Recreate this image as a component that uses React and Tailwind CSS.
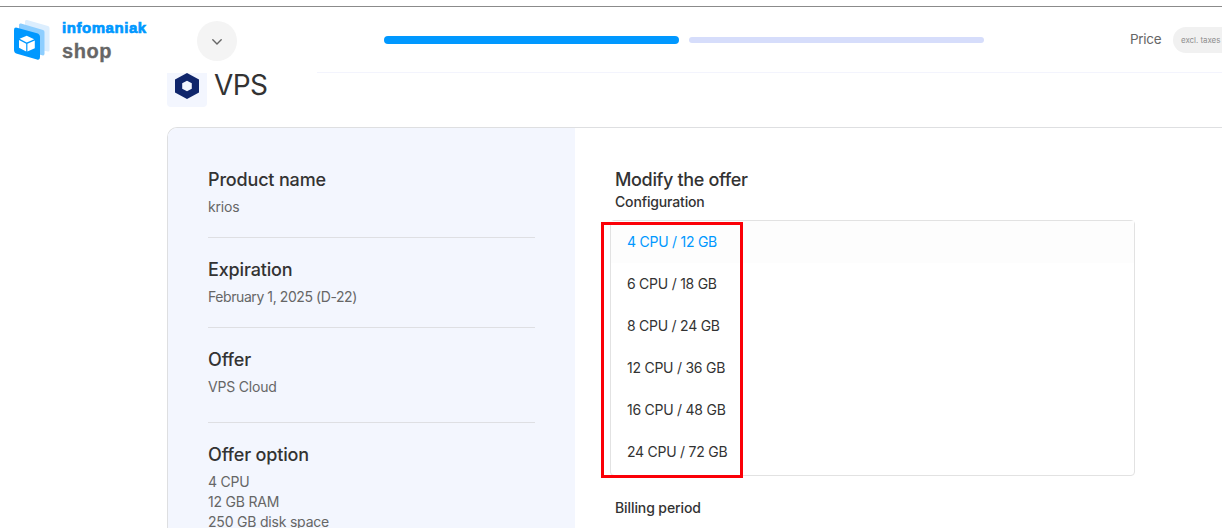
function Logo() {
  return (
    <div className="flex w-[197px] shrink-0 items-start pl-[13px]">
      <svg width="37" height="42" viewBox="0 0 37 42" className="mt-3 block">
        <path d="M12 2.5Q12 .5 14 1L35 7Q36.5 7.6 36.5 9V31Q36.5 32.8 35 32.5L12 28Z" fill="#dceefe" />
        <path d="M6 6Q6 4 8 4.5L30 11Q31.5 11.6 31.5 13V34.5Q31.5 36.6 30 36.5L6 30Z" fill="#8dceff" />
        <path d="M1 11Q1 8 4 8.7L24 14.3Q27 15.3 27 18V38Q27 41.6 24 40.6L4 34.8Q1 34 1 31Z" fill="#0098ff" />
        <path d="M13.7 16.8L21.2 20.2L13.7 23.6L6.6 19.8Z" fill="#fff" />
        <path d="M6 21L13.2 24.8V32.4L6 28.7ZM21.8 21.4L14.4 24.8V32.4L21.8 29.2Z" fill="#fff" />
      </svg>
      <div className="ml-[12px] mt-[13px] flex flex-col whitespace-nowrap font-['Liberation_Sans',sans-serif]">
        <span className="text-[15px] font-bold leading-[16px] tracking-[0.55px] text-[#0098ff] [-webkit-text-stroke:0.7px_#0098ff]">infomaniak</span>
        <span className="mt-[4px] text-[20px] font-bold leading-[22px] tracking-[0.6px] text-[#666] [-webkit-text-stroke:0.3px_#666]">shop</span>
      </div>
    </div>
  );
}

function Header() {
  return (
    <header className="flex h-[66px] shrink-0 bg-white text-[#666]">
      <Logo />
      <button className="mt-[14px] flex h-10 w-10 shrink-0 items-center justify-center rounded-full bg-[#f4f4f4]">
        <svg width="10" height="6" viewBox="0 0 10 6" fill="none" stroke="#666" strokeWidth="1.4" strokeLinecap="round" strokeLinejoin="round" className="mt-[1px]">
          <path d="M.8.8L5 5L9.2.8" />
        </svg>
      </button>
      <div className="ml-[80px] flex flex-1 border-b border-[#f3f4fd]">
        <div className="ml-[67px] flex h-[66px] w-[600px] shrink-0 items-center gap-[10px]">
          <div className="h-2 w-[295px] rounded-full bg-[#0098ff]" />
          <div className="h-1.5 w-[295px] rounded-full bg-[#d6ddfb]" />
        </div>
        <div className="ml-[146px] flex h-[66px] items-center whitespace-nowrap">
          <span className="w-[43px] pb-px text-[13.5px] tracking-[-0.3px]">Price</span>
          <span className="flex h-[26px] w-[100px] items-center rounded-full bg-[#f1f1f1] pl-2 text-[8px] tracking-[-0.05px] text-[#8f8f8f]">excl. taxes</span>
        </div>
      </div>
    </header>
  );
}

function Detail({ title, lines, className }) {
  return (
    <section className={className}>
      <h2 className="text-[18px] font-medium leading-[26px] tracking-[-0.17px] text-[#333]">{title}</h2>
      <div className="mt-[4px] text-[14px] leading-5 tracking-[-0.2px] text-[#666]">
        {lines.map((line) => <p key={line}>{line}</p>)}
      </div>
    </section>
  );
}

const options = ["4 CPU / 12 GB", "6 CPU / 18 GB", "8 CPU / 24 GB", "12 CPU / 36 GB", "16 CPU / 48 GB", "24 CPU / 72 GB"];

export default function App() {
  return (
    <div className="flex h-[528px] w-[1222px] flex-col overflow-hidden bg-white font-['Inter',sans-serif] text-[#333]">
      <div className="mt-[6px] h-px shrink-0 bg-[#8b8b8b]" />
      <Header />
      <div className="ml-[167px] flex h-[54px] shrink-0">
        <div className="flex h-[34px] w-10 justify-center rounded-b bg-[#f3f6fe]">
          <svg width="24" height="26" viewBox="0 0 24 26">
            <path fillRule="evenodd" d="M12 0L24 6.5V19.5L12 26L0 19.5V6.5ZM12 7.7L7.2 10.3V15.7L12 18.3L16.8 15.7V10.3Z" fill="#10266b" />
          </svg>
        </div>
        <h1 className="ml-[7px] text-[28px] leading-[25px] tracking-[-0.6px]">VPS</h1>
      </div>
      <main className="ml-[167px] flex h-[500px] shrink-0 overflow-hidden rounded-tl-[10px] border-l border-t border-[#dedfe1]">
        <aside className="w-[407px] shrink-0 bg-[#f3f6fe] px-10 pt-[39px]">
          <Detail title="Product name" lines={["krios"]} className="h-[71px] w-[327px] border-b border-[#dedfe3]" />
          <div className="h-[90px] w-[327px] border-b border-[#dedfe3] pt-[19px]">
            <h2 className="text-[18px] font-medium leading-[26px] tracking-[-0.15px]">Expiration</h2>
            <p className="mt-[4px] text-[14px] leading-5 tracking-[-0.42px] text-[#666]">February 1, 2025 (D-22)</p>
          </div>
          <Detail title="Offer" lines={["VPS Cloud"]} className="h-[95px] w-[327px] border-b border-[#dedfe3] pt-[19px]" />
          <Detail title="Offer option" lines={["4 CPU", "12 GB RAM", "250 GB disk space"]} className="pt-[19px]" />
        </aside>
        <section className="pl-10 pt-[39px]">
          <h2 className="text-[18px] font-medium leading-[26px] tracking-[-0.35px]">Modify the offer</h2>
          <h3 className="text-[14px] font-medium leading-[18px] tracking-[-0.15px]">Configuration</h3>
          <div className="relative -ml-[5px] mt-[9px] h-[256px] w-[525px] rounded border border-[#e2e2e2]">
            <ul className="text-[14px] tracking-[-0.25px]">
              {options.map((option) => (
                <li key={option} className="flex h-[42px] items-center pb-[2px] pl-4 first:bg-[#fdfdfd] first:text-[#0098ff]">{option}</li>
              ))}
            </ul>
            <div className="absolute -left-[10px] top-[1px] h-[256px] w-[142px] border-[3px] border-[#fb0007]" />
          </div>
          <h3 className="mt-[23px] text-[14px] font-medium leading-[18px] tracking-[-0.1px]">Billing period</h3>
        </section>
      </main>
    </div>
  );
}
